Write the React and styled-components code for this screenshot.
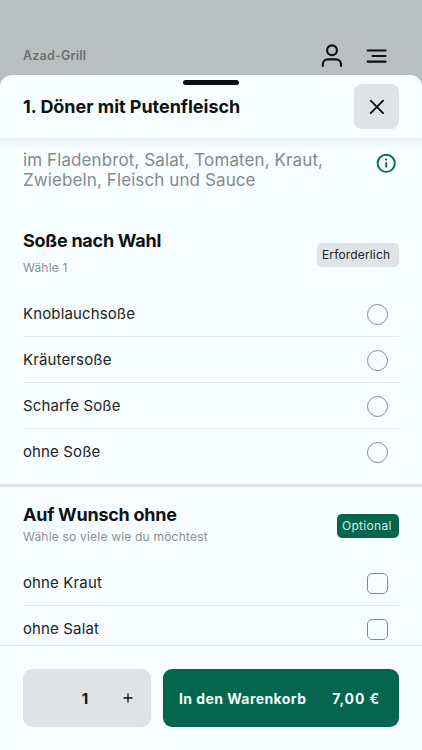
import React from 'react'
import styled, { createGlobalStyle } from 'styled-components'

const GlobalStyle = createGlobalStyle`
    * {
        box-sizing: border-box;
    }
    body {
        margin: 0;
        background-color: #b9bfbf;
        font-family: Inter, "Liberation Sans", sans-serif;
        color: #0f1213;
    }
    button {
        font-family: inherit;
        border: none;
        padding: 0;
        cursor: pointer;
    }
`;

const Screen = styled.div`
    display: flex;
    flex-direction: column;
    height: 750px;
    overflow: hidden;
    background-color: #b9bfbf;
`;

const TopBar = styled.header`
    flex: none;
    display: flex;
    justify-content: space-between;
    height: 75px;
    padding: 43px 34px 0 23px;
`;

const Restaurant = styled.div`
    font-size: 12.5px;
    line-height: 25px;
    font-weight: 600;
    letter-spacing: 0.2px;
    color: #6b7071;
`;

const TopIcons = styled.div`
    display: flex;
    align-items: flex-start;
    gap: 21px;
`;

const Sheet = styled.main`
    flex: 1;
    min-height: 0;
    display: flex;
    flex-direction: column;
    border-radius: 12px 12px 0 0;
    background-color: #f8fdff;
    overflow: hidden;
`;

const SheetHeader = styled.div`
    flex: none;
    display: flex;
    flex-direction: column;
    height: 63px;
    padding: 5px 23px 0;
`;

const Handle = styled.div`
    align-self: center;
    width: 56px;
    height: 5px;
    border-radius: 3px;
    background-color: #0d0f10;
`;

const TitleRow = styled.div`
    display: flex;
    align-items: center;
    justify-content: space-between;
    height: 45px;
    margin-top: -1px;
`;

const Title = styled.h1`
    margin: 0;
    font-size: 18px;
    line-height: 24px;
    font-weight: 650;
    letter-spacing: -0.03px;
`;

const CloseButton = styled.button`
    display: flex;
    align-items: center;
    justify-content: center;
    width: 45px;
    height: 45px;
    border-radius: 8px;
    background-color: #dfe3e5;
`;

const Content = styled.div`
    flex: 1;
    min-height: 0;
    overflow: hidden;
    background: linear-gradient(#eaeff1, #f8fdff 12px);
`;

const Description = styled.div`
    display: flex;
    align-items: flex-start;
    justify-content: space-between;
    height: 90px;
    padding: 12px 26px 0 23px;
    color: #858a8c;
`;

const DescriptionText = styled.p`
    margin: 0;
    font-size: 17px;
    line-height: 20px;
    letter-spacing: 0.1px;
    white-space: nowrap;
`;

const InfoIcon = styled.svg`
    flex: none;
    margin-top: 3px;
`;

const Group = styled.section`
    padding: 0 23px;
`;

const GroupHeader = styled.div`
    display: flex;
    justify-content: space-between;
    align-items: flex-start;
    height: ${({ $height }) => $height};
`;

const GroupTitle = styled.h2`
    margin: 1px 0 0;
    font-size: 18px;
    line-height: 24px;
    font-weight: 700;
    letter-spacing: -0.25px;
`;

const Hint = styled.div`
    margin-top: ${({ $gap }) => $gap};
    font-size: 12px;
    line-height: 16px;
    letter-spacing: 0.2px;
    color: #8b9092;
`;

const Badge = styled.div`
    flex: none;
    width: ${({ $width }) => $width};
    height: 24px;
    margin-top: ${({ $top }) => $top};
    padding-left: 5px;
    border-radius: 5px;
    font-size: 12px;
    line-height: 24px;
    letter-spacing: ${({ $green }) => ($green ? '0.3px' : '0.15px')};
    white-space: nowrap;
    background-color: ${({ $green }) => ($green ? '#056650' : '#dfe3e5')};
    color: ${({ $green }) => ($green ? '#d5e9e5' : '#202426')};
`;

const Option = styled.label`
    display: flex;
    align-items: center;
    justify-content: space-between;
    height: 46px;
    padding: 1px 11px 0 0;
    border-bottom: 1px solid #e1e6e8;
    font-size: 15px;
    line-height: 20px;
    letter-spacing: 0.13px;
    color: #202426;

    &:last-child {
        border-bottom-color: transparent;
    }
`;

const Mark = styled.span`
    width: 21px;
    height: 21px;
    border: 1px solid #85898c;
    border-radius: ${({ $round }) => ($round ? '50%' : '5px')};
`;

const Divider = styled.div`
    height: 3px;
    margin: 9px 0 15px;
    background-color: #dfe4e6;
`;

const Footer = styled.footer`
    flex: none;
    display: flex;
    gap: 12px;
    height: 105px;
    padding: 23px 23px 0;
    border-top: 1px solid #dfe4e6;
`;

const Quantity = styled.div`
    display: grid;
    grid-template-columns: 40px 44px 42px;
    align-items: center;
    width: 128px;
    height: 58px;
    border-radius: 9px;
    background-color: #dfe3e5;
    text-align: center;
    font-size: 15px;
    font-weight: 700;
`;

const PlusButton = styled.button`
    display: flex;
    justify-content: center;
    background-color: transparent;
`;

const CartButton = styled.button`
    flex: 1;
    display: flex;
    align-items: center;
    justify-content: space-between;
    height: 58px;
    padding: 0 19px 0 16px;
    border-radius: 9px;
    background-color: #056650;
    color: #f4fdfb;
    font-size: 14px;
    font-weight: 700;
    letter-spacing: 0.43px;
    white-space: nowrap;
`;

const Price = styled.span`
    letter-spacing: 0.9px;
`;

const sauces = ['Knoblauchsoße', 'Kräutersoße', 'Scharfe Soße', 'ohne Soße'];
const without = ['ohne Kraut', 'ohne Salat'];

const UserIcon = () => (
    <svg width="22" height="26" viewBox="0 0 22 26" fill="none" stroke="#0d0f10" strokeWidth="2.1" strokeLinecap="round">
        <circle cx="11" cy="7.3" r="4.9" />
        <path d="M1.8 23v-1.6a5 5 0 0 1 5-5h8.2a5 5 0 0 1 5 5V23" />
    </svg>
)

const MenuIcon = () => (
    <svg width="24" height="26" viewBox="0 0 24 26" fill="none" stroke="#0d0f10" strokeWidth="2.1" strokeLinecap="round">
        <path d="M3.6 7.5h18M8.6 13h13M3.6 18.6h18" />
    </svg>
)

const App = () => {
    return (
        <>
            <GlobalStyle />
            <Screen>
                <TopBar>
                    <Restaurant>Azad-Grill</Restaurant>
                    <TopIcons>
                        <UserIcon />
                        <MenuIcon />
                    </TopIcons>
                </TopBar>
                <Sheet>
                    <SheetHeader>
                        <Handle />
                        <TitleRow>
                            <Title>1. Döner mit Putenfleisch</Title>
                            <CloseButton aria-label="Schließen">
                                <svg width="17" height="17" viewBox="0 0 17 17" stroke="#0d0f10" strokeWidth="1.9" strokeLinecap="round">
                                    <path d="M2.7 2.7l12.4 12.4M15.1 2.7L2.7 15.1" />
                                </svg>
                            </CloseButton>
                        </TitleRow>
                    </SheetHeader>
                    <Content>
                        <Description>
                            <DescriptionText>
                                im Fladenbrot, Salat, Tomaten, Kraut,<br />
                                Zwiebeln, Fleisch und Sauce
                            </DescriptionText>
                            <InfoIcon width="20" height="20" viewBox="0 0 20 20" fill="none" stroke="#0b6b53" strokeWidth="1.9">
                                <circle cx="10.2" cy="10.3" r="8.6" />
                                <path d="M10.2 9.3v5.1" />
                                <circle cx="10.2" cy="6.6" r="1.1" fill="#0b6b53" stroke="none" />
                            </InfoIcon>
                        </Description>
                        <Group>
                            <GroupHeader $height="63px">
                                <div>
                                    <GroupTitle>Soße nach Wahl</GroupTitle>
                                    <Hint $gap="7px">Wähle 1</Hint>
                                </div>
                                <Badge $width="82px" $top="15px">Erforderlich</Badge>
                            </GroupHeader>
                            {sauces.map((name) => (
                                <Option key={name}>
                                    {name}
                                    <Mark $round />
                                </Option>
                            ))}
                        </Group>
                        <Divider />
                        <Group>
                            <GroupHeader $height="58px">
                                <div>
                                    <GroupTitle>Auf Wunsch ohne</GroupTitle>
                                    <Hint $gap="2px">Wähle so viele wie du möchtest</Hint>
                                </div>
                                <Badge $green $width="62px" $top="12px">Optional</Badge>
                            </GroupHeader>
                            {without.map((name) => (
                                <Option key={name}>
                                    {name}
                                    <Mark />
                                </Option>
                            ))}
                        </Group>
                    </Content>
                    <Footer>
                        <Quantity>
                            <span />
                            <span>1</span>
                            <PlusButton aria-label="Mehr">
                                <svg width="10" height="10" viewBox="0 0 10 10" stroke="#0d0f10" strokeWidth="1.3">
                                    <path d="M5 .5v9M.5 5h9" />
                                </svg>
                            </PlusButton>
                        </Quantity>
                        <CartButton>
                            <span>In den Warenkorb</span>
                            <Price>7,00 €</Price>
                        </CartButton>
                    </Footer>
                </Sheet>
            </Screen>
        </>
    )
}

export default App
